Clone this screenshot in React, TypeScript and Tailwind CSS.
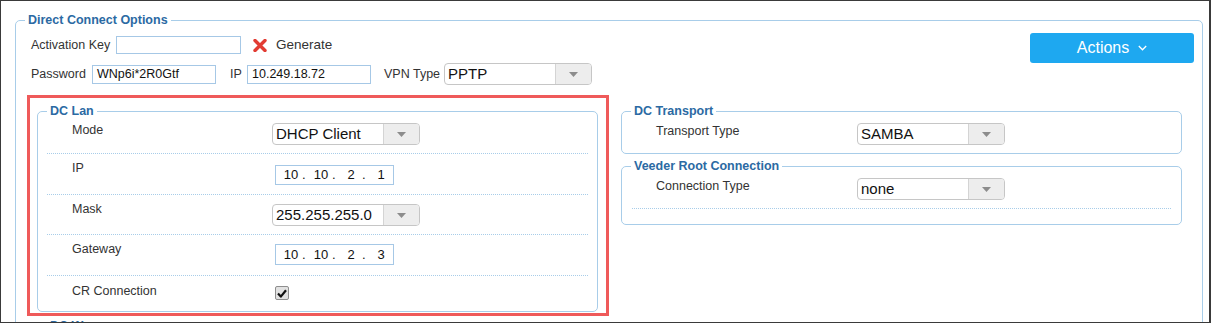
import React from "react";

const BORDER = "border-[#a8cde9]";

function Legend({ children }: { children: React.ReactNode }) {
  return (
    <legend className="ml-[9px] px-[3px] text-[12.5px] leading-[14px] font-bold text-[#2b6aa3]">
      {children}
    </legend>
  );
}

function Select({ value, w = 148 }: { value: string; w?: number }) {
  return (
    <div
      className="flex h-[22px] shrink-0 overflow-hidden rounded-[4px] border border-[#c6c6c6] bg-white"
      style={{ width: w }}
    >
      <span className="flex-1 pl-[3px] text-[15px] leading-[20px] text-[#111]">{value}</span>
      <span className="flex w-[36px] items-center justify-center border-l border-[#d4d4d4] bg-[#ededed]">
        <svg width="9" height="5" viewBox="0 0 9 5">
          <path d="M0 0 L9 0 L4.5 5 Z" fill="#8c8c8c" />
        </svg>
      </span>
    </div>
  );
}

function TextInput({ value, w, h = 18 }: { value: string; w: number; h?: number }) {
  return (
    <div
      className="shrink-0 border border-[#a6c8e6] bg-white pl-[4px] text-[12.5px] text-[#111]"
      style={{ width: w, height: h, lineHeight: `${h - 2}px` }}
    >
      {value}
    </div>
  );
}

function IpInput({ octets, h }: { octets: string[]; h: number }) {
  return (
    <div
      className="ml-[3px] flex w-[119px] shrink-0 border border-[#a6c8e6] bg-white pl-[5px] text-[13px] text-[#111]"
      style={{ height: h, lineHeight: `${h - 2}px` }}
    >
      {octets.map((o, i) => (
        <React.Fragment key={i}>
          <span className="w-[20px] text-center">{o}</span>
          {i < octets.length - 1 && <span className="w-[10px] pl-[1px] text-left">.</span>}
        </React.Fragment>
      ))}
    </div>
  );
}

function Checkbox() {
  return (
    <div className="ml-[3px] flex h-[14px] w-[14px] items-center justify-center rounded-[2px] border border-[#8e8e8e] bg-[#e2e2e2]">
      <svg width="10" height="9" viewBox="0 0 10 9">
        <path d="M1 4.6 L3.8 7.6 L9 1.2" fill="none" stroke="#111" strokeWidth="2.2" strokeLinejoin="round" />
      </svg>
    </div>
  );
}

function Label({ children, w }: { children: React.ReactNode; w: number }) {
  return (
    <span className="shrink-0 text-[12.5px] leading-[14px] text-[#333]" style={{ width: w }}>
      {children}
    </span>
  );
}

export default function App() {
  return (
    <div className="h-[323px] w-[1211px] overflow-hidden border border-r-2 border-[#3a3a3a] bg-white font-['Liberation_Sans',Arial,sans-serif]">
      <fieldset className={`ml-[14px] mt-[12px] w-[1188px] rounded-[5px] border ${BORDER}`}>
        <Legend>Direct Connect Options</Legend>

        <div className="flex justify-between">
          <div className="pl-[15px]">
            <div className="mt-[9px] flex h-[18px] items-center">
              <Label w={85}>Activation Key</Label>
              <TextInput value="" w={125} h={18} />
              <svg className="ml-[12px]" width="14" height="13" viewBox="0 0 14 13">
                <path d="M2 1.5 L12 11.5 M12 1.5 L2 11.5" stroke="#e23c33" strokeWidth="3.4" strokeLinecap="round" />
              </svg>
              <span className="ml-[9px] text-[13.5px] leading-[16px] text-[#333]">Generate</span>
            </div>
            <div className="mt-[9px] flex h-[22px] items-center">
              <Label w={61}>Password</Label>
              <TextInput value="WNp6i*2R0Gtf" w={124} h={19} />
              <span className="ml-[14px] w-[17px] text-[12.5px] leading-[14px] text-[#333]">IP</span>
              <TextInput value="10.249.18.72" w={124} h={19} />
              <span className="ml-[13px] w-[60px] text-[12.5px] leading-[14px] text-[#333]">VPN Type</span>
              <Select value="PPTP" w={148} />
            </div>
          </div>
          <button className="mr-[8px] mt-[6px] flex h-[30px] w-[164px] items-center justify-center gap-[9px] rounded-[3px] bg-[#1ea8f0] text-[16px] text-white">
            <span>Actions</span>
            <svg width="9" height="6" viewBox="0 0 9 6">
              <path d="M0.8 1 L4.5 4.8 L8.2 1" fill="none" stroke="white" strokeWidth="1.3" />
            </svg>
          </button>
        </div>

        <div className="ml-[11px] mt-[10px] flex items-start">
          <div className="w-[582px] shrink-0 border-[3px] border-[#ef5a5a] pb-[1px] pl-[7px] pr-[8px] pt-[6px]">
            <fieldset className={`w-[561px] rounded-[5px] border ${BORDER}`}>
              <Legend>DC Lan</Legend>
              <div className="mx-[9px]">
                <div className={`flex h-[36px] items-start border-b border-dotted ${BORDER} pt-[5px]`}>
                  <span className="w-[225px] shrink-0 pl-[25px] text-[12.5px] leading-[14px] text-[#333]">Mode</span>
                  <Select value="DHCP Client" />
                </div>
                <div className={`flex h-[41px] items-start border-b border-dotted ${BORDER} pt-[7px]`}>
                  <span className="w-[225px] shrink-0 pl-[25px] text-[12.5px] leading-[14px] text-[#333]">IP</span>
                  <div className="mt-[4px]">
                    <IpInput octets={["10", "10", "2", "1"]} h={20} />
                  </div>
                </div>
                <div className={`flex h-[40px] items-start border-b border-dotted ${BORDER} pt-[7px]`}>
                  <span className="w-[225px] shrink-0 pl-[25px] text-[12.5px] leading-[14px] text-[#333]">Mask</span>
                  <div className="mt-[2px]">
                    <Select value="255.255.255.0" />
                  </div>
                </div>
                <div className={`flex h-[41px] items-start border-b border-dotted ${BORDER} pt-[7px]`}>
                  <span className="w-[225px] shrink-0 pl-[25px] text-[12.5px] leading-[14px] text-[#333]">Gateway</span>
                  <div className="mt-[2px]">
                    <IpInput octets={["10", "10", "2", "3"]} h={21} />
                  </div>
                </div>
                <div className="flex h-[35px] items-start pt-[8px]">
                  <span className="w-[225px] shrink-0 pl-[25px] text-[12.5px] leading-[14px] text-[#333]">CR Connection</span>
                  <div className="mt-[2px]">
                    <Checkbox />
                  </div>
                </div>
              </div>
            </fieldset>
          </div>

          <div className="ml-[12px] w-[561px] pt-[9px]">
            <fieldset className={`rounded-[5px] border ${BORDER}`}>
              <Legend>DC Transport</Legend>
              <div className="flex items-start pb-[8px] pl-[34px] pt-[5px]">
                <span className="w-[201px] shrink-0 pt-[1px] text-[12.5px] leading-[14px] text-[#333]">Transport Type</span>
                <Select value="SAMBA" />
              </div>
            </fieldset>
            <fieldset className={`mt-[5px] rounded-[5px] border ${BORDER}`}>
              <Legend>Veeder Root Connection</Legend>
              <div className="mx-[10px]">
                <div className={`flex items-start border-b border-dotted ${BORDER} pb-[8px] pl-[24px] pt-[5px]`}>
                  <span className="w-[201px] shrink-0 pt-[1px] text-[12.5px] leading-[14px] text-[#333]">Connection Type</span>
                  <Select value="none" />
                </div>
                <div className="h-[15px]" />
              </div>
            </fieldset>
          </div>
        </div>

        <fieldset className={`ml-[21px] mt-[3px] h-[60px] w-[561px] rounded-[5px] border ${BORDER}`}>
          <Legend>DC Wan</Legend>
        </fieldset>
      </fieldset>
    </div>
  );
}
